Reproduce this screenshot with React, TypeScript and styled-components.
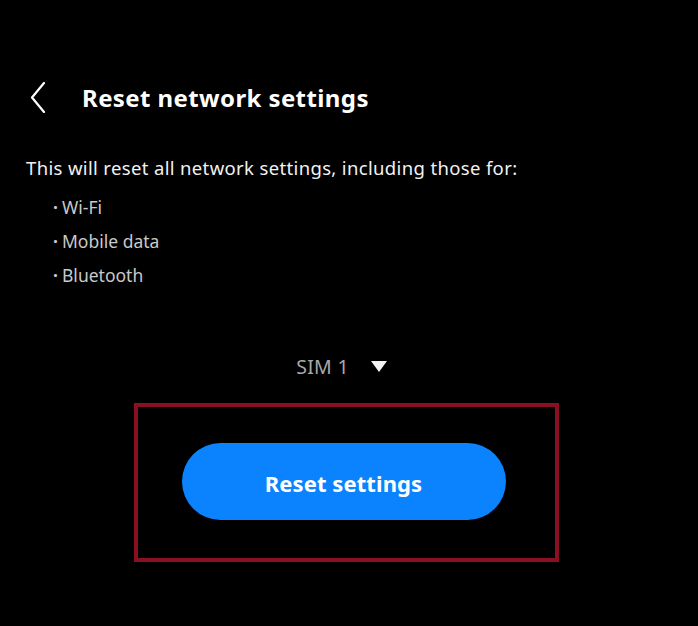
import React from "react";
import styled, { createGlobalStyle } from "styled-components";

const GlobalStyle = createGlobalStyle`
  html, body {
    margin: 0;
    padding: 0;
    background: #000;
  }
  body {
    font-family: "Noto Sans", "Open Sans", sans-serif;
    color: #fff;
  }
`;

const Page = styled.div`
  width: 698px;
  height: 626px;
  background: #000;
  display: flex;
  flex-direction: column;
  box-sizing: border-box;
  padding: 72px 0 0 0;
`;

const Header = styled.header`
  display: flex;
  align-items: center;
  height: 50px;
  padding-left: 29px;
`;

const BackButton = styled.button`
  display: flex;
  align-items: center;
  justify-content: center;
  width: 18px;
  height: 32px;
  padding: 0;
  margin: 0 35px 0 0;
  background: none;
  border: none;
  color: #fff;
`;

const Title = styled.h1`
  margin: 0;
  font-size: 24px;
  font-weight: 700;
  letter-spacing: 0.4px;
  color: #fff;
`;

const Description = styled.p`
  margin: 34px 0 0 26px;
  font-size: 18.5px;
  line-height: 24px;
  letter-spacing: 0.35px;
  color: #f2f2f2;
`;

const List = styled.ul`
  list-style: none;
  margin: 10px 0 0 0;
  padding: 0 0 0 53px;
`;

const Item = styled.li`
  display: flex;
  align-items: center;
  height: 34px;
  font-size: 17.5px;
  color: #c9c9c9;
  &::before {
    content: "·";
    width: 9px;
    font-weight: 700;
  }
`;

const Lower = styled.div`
  display: flex;
  flex-direction: column;
  align-items: center;
  padding-right: 9px;
`;

const SimRow = styled.div`
  display: flex;
  align-items: center;
  gap: 22px;
  height: 30px;
  margin-top: 59px;
  margin-left: -6px;
  font-size: 19.5px;
  letter-spacing: 0.3px;
  color: #a9a9a9;
`;

const Triangle = styled.span`
  width: 0;
  height: 0;
  border-left: 8px solid transparent;
  border-right: 8px solid transparent;
  border-top: 11px solid #f4f4f4;
`;

const Highlight = styled.div`
  display: flex;
  justify-content: center;
  box-sizing: border-box;
  width: 425px;
  height: 159px;
  margin-top: 22px;
  margin-left: 4px;
  padding-top: 36px;
  border: 4px solid #8a0f22;
`;

const ResetButton = styled.button`
  width: 324px;
  height: 77px;
  margin-right: 6px;
  border: none;
  border-radius: 39px;
  background: #0b83ff;
  color: #fff;
  font-family: inherit;
  font-size: 22px;
  font-weight: 700;
  letter-spacing: 0.1px;
  padding-top: 3px;
`;

export default function App() {
  return (
    <>
      <GlobalStyle />
      <Page>
        <Header>
          <BackButton aria-label="Back">
            <svg width="16" height="32" viewBox="0 0 16 32" fill="none">
              <path d="M14 2 L2 16.5 L14 31" stroke="#fff" strokeWidth="2.2" strokeLinecap="round" strokeLinejoin="round" />
            </svg>
          </BackButton>
          <Title>Reset network settings</Title>
        </Header>
        <Description>This will reset all network settings, including those for:</Description>
        <List>
          <Item>Wi-Fi</Item>
          <Item>Mobile data</Item>
          <Item>Bluetooth</Item>
        </List>
        <Lower>
          <SimRow>
            <span>SIM 1</span>
            <Triangle />
          </SimRow>
          <Highlight>
            <ResetButton>Reset settings</ResetButton>
          </Highlight>
        </Lower>
      </Page>
    </>
  );
}
